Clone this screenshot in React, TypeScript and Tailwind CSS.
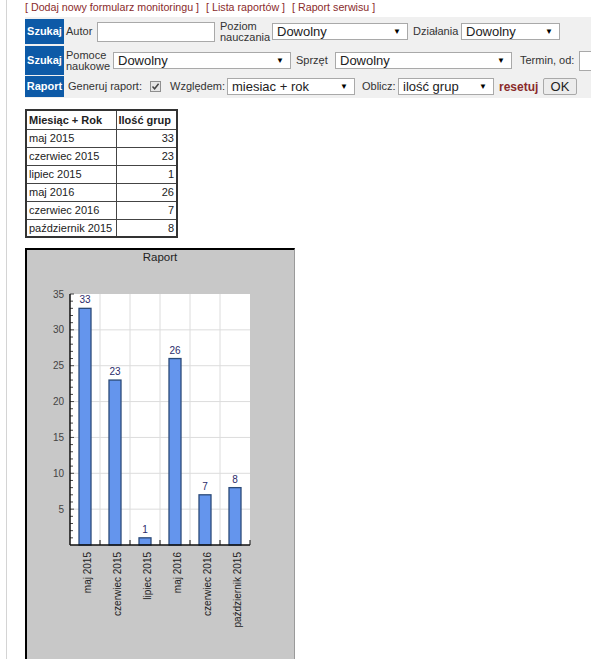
import React from 'react'

const LINK = 'text-[#8a2b2b]'

function Select({ value, w, h = 'h-[17px]' }: { value: string; w: string; h?: string }) {
  return (
    <div className={`${w} ${h} shrink-0 border border-[#a9a9a9] bg-white flex items-center justify-between pl-[4px] pr-[6px] text-[13px] leading-none text-[#222]`}>
      <span>{value}</span>
      <span className="text-[8px] text-black">▼</span>
    </div>
  )
}

function Tag({ children }: { children: React.ReactNode }) {
  return (
    <div className="w-[39px] self-stretch shrink-0 bg-[#0d5aa7] text-white font-bold flex items-center justify-center text-[11px]">
      {children}
    </div>
  )
}

const rows: [string, number][] = [
  ['maj 2015', 33],
  ['czerwiec 2015', 23],
  ['lipiec 2015', 1],
  ['maj 2016', 26],
  ['czerwiec 2016', 7],
  ['październik 2015', 8],
]

function Chart() {
  const X0 = 43, X1 = 223, YT = 44, YB = 295
  const unit = (YB - YT) / 35
  const y = (v: number) => YB - v * unit
  const slot = (X1 - X0) / rows.length
  return (
    <svg width="268" height="428" className="block" fontFamily="'Liberation Sans', Arial, sans-serif">
      <text x="133" y="11" fontSize="11.5" fill="#222" textAnchor="middle">Raport</text>
      <rect x={X0} y={YT} width={X1 - X0} height={YB - YT} fill="#fff" />
      {[5, 10, 15, 20, 25, 30].map(v => (
        <line key={v} x1={X0} x2={X1} y1={y(v)} y2={y(v)} stroke="#dcdcdc" />
      ))}
      {rows.map((_, i) => i > 0 && (
        <line key={i} x1={X0 + i * slot} x2={X0 + i * slot} y1={YT} y2={YB} stroke="#dcdcdc" />
      ))}
      {Array.from({ length: 35 }, (_, i) => i + 1).map(v => (
        <line key={v} x1={X0} x2={X0 + (v % 5 === 0 ? 4 : 3)} y1={y(v)} y2={y(v)} stroke="#444" />
      ))}
      {[5, 10, 15, 20, 25, 30, 35].map(v => (
        <text key={v} x="37" y={y(v) + 3.5} fontSize="10" fill="#444" textAnchor="end">{v}</text>
      ))}
      {rows.map(([name, v], i) => {
        const cx = X0 + i * slot + slot / 2
        return (
          <g key={name}>
            <rect x={cx - 6} y={y(v)} width="12" height={YB - y(v)} fill="#6495ed" stroke="#2b4a78" strokeWidth="1.3" />
            <text x={cx} y={y(v) - 5} fontSize="10" fill="#2b2b6b" textAnchor="middle">{v}</text>
            <text transform={`translate(${cx + 5.5} 302) rotate(-90)`} fontSize="10" fill="#222" textAnchor="end">{name}</text>
            <line x1={X0 + (i + 1) * slot} x2={X0 + (i + 1) * slot} y1={YB - 5} y2={YB} stroke="#111" />
          </g>
        )
      })}
      <line x1={X0} x2={X0} y1={YT} y2={YB} stroke="#111" strokeWidth="1.5" />
      <line x1={X0} x2={X1} y1={YB} y2={YB} stroke="#111" strokeWidth="1.5" />
    </svg>
  )
}

export default function App() {
  return (
    <div className="min-h-screen overflow-hidden bg-white font-['Liberation_Sans',Arial,sans-serif] text-[11px] text-[#333]">
      <div className="ml-[6px] border-l border-[#d4d4d4] pl-[18px] min-h-[700px]">
        {/* Linki */}
        <div className={`h-[15px] flex items-center gap-[7px] text-[10.7px] ${LINK}`}>
          <span>[ Dodaj nowy formularz monitoringu ]</span>
          <span>[ Lista raportów ]</span>
          <span>[ Raport serwisu ]</span>
        </div>

        {/* Formularz */}
        <div className="mt-[2px] pt-[2px] pb-[1px] bg-[#f0f0f0] w-[700px]">
          <div className="flex items-center h-[25px]">
            <Tag>Szukaj</Tag>
            <span className="ml-[2px] w-[31px] shrink-0">Autor</span>
            <div className="w-[118px] h-[20px] shrink-0 border border-[#a9a9a9] bg-white" />
            <span className="ml-[5px] w-[52px] shrink-0 leading-[11px]">Poziom<br />nauczania</span>
            <Select value="Dowolny" w="w-[136px]" />
            <span className="ml-[5px] w-[48px] shrink-0">Działania</span>
            <Select value="Dowolny" w="w-[99px]" />
          </div>
          <div className="flex items-center h-[29px] mt-[2px]">
            <Tag>Szukaj</Tag>
            <span className="ml-[2px] w-[47px] shrink-0 leading-[11px] pt-[1px]">Pomoce<br />naukowe</span>
            <Select value="Dowolny" w="w-[178px]" />
            <span className="ml-[5px] w-[39px] shrink-0">Sprzęt</span>
            <Select value="Dowolny" w="w-[177px]" />
            <span className="ml-[8px] w-[59px] shrink-0">Termin, od:</span>
            <div className="w-[60px] h-[20px] shrink-0 border border-[#a9a9a9] bg-white" />
          </div>
          <div className="flex items-center h-[21px] mt-[1px]">
            <Tag>Raport</Tag>
            <span className="ml-[4px] w-[82px] shrink-0">Generuj raport:</span>
            <div className="w-[11px] h-[11px] shrink-0 border border-[#8f8f8f] bg-[#e6e6e6] flex items-center justify-center">
              <svg width="9" height="9" viewBox="0 0 9 9">
                <path d="M1.5 4.6 L3.6 6.8 L7.6 1.8" fill="none" stroke="#444" strokeWidth="1.5" />
              </svg>
            </div>
            <span className="ml-[9px] w-[57px] shrink-0">Względem:</span>
            <Select value="miesiac + rok" w="w-[128px]" />
            <span className="ml-[7px] w-[36px] shrink-0">Oblicz:</span>
            <Select value="ilość grup" w="w-[96px]" />
            <span className={`ml-[5px] w-[44px] shrink-0 font-bold text-[12px] ${LINK}`}>resetuj</span>
            <div className="w-[34px] h-[17px] shrink-0 border border-[#a9a9a9] rounded-[2px] bg-[#ececec] flex items-center justify-center text-[13px] leading-none text-[#222]">
              OK
            </div>
          </div>
        </div>

        {/* Tabela */}
        <table className="mt-[11px] border-collapse border-2 border-[#333] text-[11px] text-[#222] whitespace-nowrap">
          <thead>
            <tr className="h-[19px]">
              <th className="w-[90px] border border-[#444] px-[2px] text-left font-bold">Miesiąc + Rok</th>
              <th className="w-[61px] border border-[#444] px-[2px] text-left font-bold">Ilość grup</th>
            </tr>
          </thead>
          <tbody>
            {rows.map(([name, v]) => (
              <tr key={name} className="h-[18px]">
                <td className="border border-[#444] px-[2px]">{name}</td>
                <td className="border border-[#444] px-[2px] text-right">{v}</td>
              </tr>
            ))}
          </tbody>
        </table>

        {/* Wykres */}
        <div className="mt-[10px] w-[270px] h-[430px] bg-[#c8c8c8] border-l-2 border-t-2 border-black border-r border-r-[#9a9a9a]">
          <Chart />
        </div>
      </div>
    </div>
  )
}
